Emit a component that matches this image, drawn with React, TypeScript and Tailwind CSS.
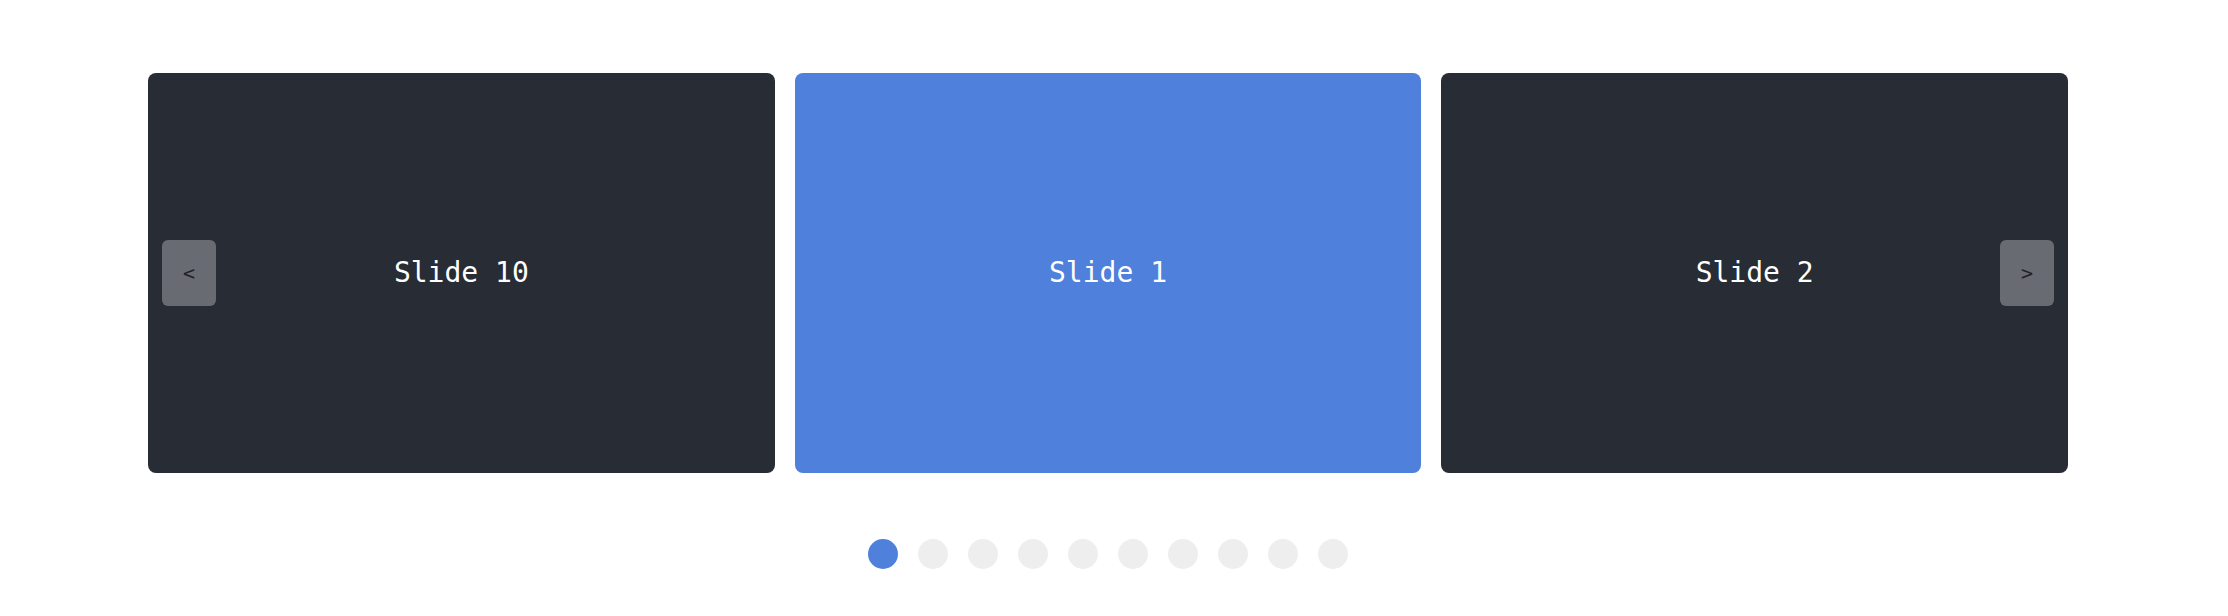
import { useState } from "react";

const slides = Array.from({ length: 10 }, (_, i) => `Slide ${i + 1}`);

export default function App() {
  const [active, setActive] = useState(0);
  const n = slides.length;
  const visible = [(active - 1 + n) % n, active, (active + 1) % n];

  return (
    <div className="min-h-[616px] bg-white pt-[73px]">
      <div className="ml-[148px] w-[1920px]">
        <div className="relative">
          <div className="grid grid-cols-3 gap-5">
            {visible.map((idx) => (
              <div
                key={idx}
                className={`flex h-[400px] items-center justify-center rounded-lg text-[28px] text-white ${
                  idx === active ? "bg-[#4f80db]" : "bg-[#282c34]"
                }`}
                style={{ fontFamily: '"DejaVu Sans Mono", monospace' }}
              >
                {slides[idx]}
              </div>
            ))}
          </div>

          <button
            onClick={() => setActive((active - 1 + n) % n)}
            className="absolute left-[14px] top-1/2 flex h-[66px] w-[54px] -translate-y-1/2 items-center justify-center rounded-md bg-[#686b71] text-[20px] text-[#1f2228]"
            style={{ fontFamily: '"DejaVu Sans Mono", monospace' }}
          >
            &lt;
          </button>
          <button
            onClick={() => setActive((active + 1) % n)}
            className="absolute right-[14px] top-1/2 flex h-[66px] w-[54px] -translate-y-1/2 items-center justify-center rounded-md bg-[#686b71] text-[20px] text-[#1f2228]"
            style={{ fontFamily: '"DejaVu Sans Mono", monospace' }}
          >
            &gt;
          </button>
        </div>

        <div className="mt-[66px] flex justify-center gap-5">
          {slides.map((_, i) => (
            <button
              key={i}
              onClick={() => setActive(i)}
              className={`h-[30px] w-[30px] rounded-full ${
                i === active ? "bg-[#4f80db]" : "bg-[#eeeeee]"
              }`}
            />
          ))}
        </div>
      </div>
    </div>
  );
}
